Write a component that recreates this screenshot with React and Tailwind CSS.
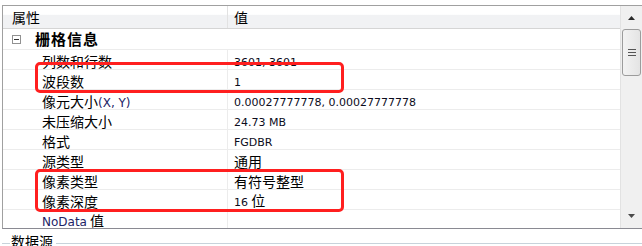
import React from 'react';

const cjk = "font-['Noto_Sans_CJK_SC','Noto_Sans',sans-serif]";
const latin = "font-['DejaVu_Sans','Noto_Sans_CJK_SC',sans-serif] text-[11px]";

// 属性行：label / value 都可能混排中英文
const rows = [
  { label: [['c', '列数和行数']], value: [['l', '3601, 3601']] },
  { label: [['c', '波段数']], value: [['l', '1']] },
  { label: [['c', '像元大小'], ['lb', '(X, Y)']], value: [['l', '0.00027777778, 0.00027777778']] },
  { label: [['c', '未压缩大小']], value: [['l', '24.73 MB']] },
  { label: [['c', '格式']], value: [['l', 'FGDBR']] },
  { label: [['c', '源类型']], value: [['c', '通用']] },
  { label: [['c', '像素类型']], value: [['c', '有符号整型']] },
  { label: [['c', '像素深度']], value: [['l', '16'], ['c', '\u00a0位']] },
  { label: [['lb', 'NoData'], ['c', '\u00a0值']], value: [] },
];

function Txt({ parts }) {
  return (
    <span className="whitespace-nowrap">
      {parts.map(([kind, text], i) => (
        <span
          key={i}
          className={
            kind === 'c'
              ? `${cjk} text-[14px] text-black`
              : kind === 'lb'
              ? `${latin} text-[12px] text-[#1d2466]`
              : `${latin} text-[#0c0c1c]`
          }
        >
          {text}
        </span>
      ))}
    </span>
  );
}

function Arrow({ down }) {
  return (
    <svg width="7" height="4" viewBox="0 0 7 4">
      <path d={down ? 'M0 0 L7 0 L3.5 4 Z' : 'M0 4 L3.5 0 L7 4 Z'} fill={down ? '#4a4a4a' : '#2a2a2a'} />
    </svg>
  );
}

export default function App() {
  return (
    <div className={`w-[642px] h-[246px] bg-white relative overflow-hidden ${cjk}`}>
      <div className="ml-[2px] mt-[5px] h-[224px] border-t border-l border-b border-t-[#a0a0a0] border-l-[#a0a0a0] border-b-[#8a8a92] flex">
        {/* 表格区 */}
        <div className="flex-1 flex flex-col min-w-0">
          <div className="h-[24px] flex border-b border-[#d5d5d5] bg-[linear-gradient(to_bottom,#ffffff_0%,#ffffff_38%,#f1f2f4_42%,#f1f2f4_100%)]">
            <div className="w-[225px] border-r border-[#e2e2e2] pl-[9px] flex items-center text-[14px] text-black">属性</div>
            <div className="flex-1 pl-[6px] flex items-center text-[14px] text-black">值</div>
          </div>

          <div className="h-[21px] flex border-b border-[#ececec]">
            <div className="w-[225px] flex items-center">
              <div className="ml-[9px] w-[9px] h-[9px] border border-[#919191] flex items-center justify-center">
                <div className="w-[5px] h-px bg-[#333]"></div>
              </div>
              <span className="ml-[14px] text-[15px] font-bold tracking-[1px] text-black">栅格信息</span>
            </div>
            <div className="flex-1"></div>
          </div>

          {rows.map((r, i) => (
            <div key={i} className={`flex ${i === rows.length - 1 ? 'h-[18px]' : 'h-[20px] border-b border-[#ececec]'}`}>
              <div className="w-[225px] border-r border-[#ececec] pl-[39px] flex items-center">
                <Txt parts={r.label} />
              </div>
              <div className="flex-1 pl-[6px] flex items-center">
                <Txt parts={r.value} />
              </div>
            </div>
          ))}
        </div>

        {/* 滚动条 */}
        <div className="w-[22px] border-l border-[#e2e2e2] bg-[#f0f0f0] flex flex-col">
          <div className="h-[23px] flex items-center justify-center">
            <Arrow />
          </div>
          <div className="h-[47px] mx-[1px] rounded-[3px] border border-[#9c9c9c] bg-[linear-gradient(to_right,#f3f3f3,#e4e4e4)] flex flex-col items-center justify-center gap-[2px]">
            <div className="w-[8px] h-px bg-[#555]"></div>
            <div className="w-[8px] h-px bg-[#555]"></div>
            <div className="w-[8px] h-px bg-[#555]"></div>
          </div>
          <div className="flex-1"></div>
          <div className="h-[24px] flex items-center justify-center">
            <Arrow down />
          </div>
        </div>
      </div>

      {/* 数据源 分组框 */}
      <div className="flex items-start">
        <div className="mt-[14px] ml-[2px] w-[8px] h-px bg-[#c8d3db]"></div>
        <span className="ml-[1px] mt-[4px] leading-[16px] text-[14px] text-black">数据源</span>
        <div className="mt-[14px] ml-[3px] flex-1 h-px bg-[#c8d3db]"></div>
      </div>

      {/* 红框标注 */}
      <div className="absolute left-[35px] top-[62px] w-[309px] h-[31px] border-[3px] border-[#ff1f1f] rounded-[5px]"></div>
      <div className="absolute left-[35px] top-[169px] w-[309px] h-[43px] border-[3px] border-[#ff1f1f] rounded-[5px]"></div>
    </div>
  );
}
